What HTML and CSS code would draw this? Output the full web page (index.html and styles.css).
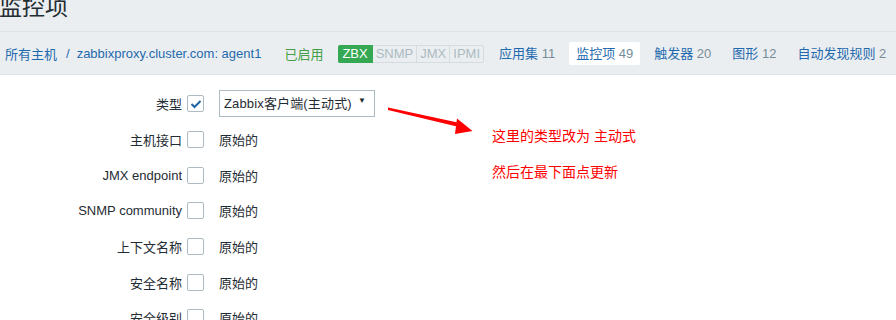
FILE: index.html
```html
<!DOCTYPE html>
<html lang="zh-CN">
<head>
  <meta charset="UTF-8" />
  <title>监控项</title>
  <link rel="stylesheet" href="styles.css">
</head>
<body>
  <div class="page">
    <div class="header">
      <h1>监控项</h1>
    </div>
    <div class="nav">
      <a class="crumb">所有主机</a>
      <span class="sep">/</span>
      <a class="crumb">zabbixproxy.cluster.com: agent1</a>
      <span class="status">已启用</span>
      <div class="badges">
        <span class="badge on">ZBX</span>
        <span class="badge">SNMP</span>
        <span class="badge">JMX</span>
        <span class="badge">IPMI</span>
      </div>
      <a class="tab">应用集 <span class="count">11</span></a>
      <a class="tab active">监控项 <span class="count">49</span></a>
      <a class="tab">触发器 <span class="count">20</span></a>
      <a class="tab">图形 <span class="count">12</span></a>
      <a class="tab">自动发现规则 <span class="count">2</span></a>
    </div>

    <div class="form">
      <div class="row">
        <label>类型</label>
        <span class="check checked">
          <svg width="12" height="10" viewBox="0 0 12 10"><path d="M1.5 5 L4.5 8 L10.5 2" fill="none" stroke="#1f65a6" stroke-width="2"/></svg>
        </span>
        <div class="select"><span class="select-text">Zabbix客户端(主动式)</span><span class="caret">▼</span></div>
      </div>
      <div class="row"><label>主机接口</label><span class="check"></span><span class="value">原始的</span></div>
      <div class="row"><label>JMX endpoint</label><span class="check"></span><span class="value">原始的</span></div>
      <div class="row"><label>SNMP community</label><span class="check"></span><span class="value">原始的</span></div>
      <div class="row"><label>上下文名称</label><span class="check"></span><span class="value">原始的</span></div>
      <div class="row"><label>安全名称</label><span class="check"></span><span class="value">原始的</span></div>
      <div class="row"><label>安全级别</label><span class="check"></span><span class="value">原始的</span></div>
    </div>

    <svg class="arrow" width="896" height="320" viewBox="0 0 896 320">
      <polygon points="388,107.5 388,110 459,127 460,123" fill="#ff0000"/>
      <polygon points="457,118.5 472.5,131 455,134" fill="#ff0000"/>
    </svg>
    <div class="note note-1">这里的类型改为 主动式</div>
    <div class="note note-2">然后在最下面点更新</div>
  </div>
</body>
</html>
```

FILE: styles.css
```css
body {
  margin: 0;
  font-family: 'Liberation Sans', Arial, 'Noto Sans CJK SC', sans-serif;
  font-size: 13px;
  color: #1f2c33;
  background: #fff;
}
.page {
  position: relative;
  width: 896px;
  height: 320px;
  overflow: hidden;
}
.header {
  height: 31px;
  background: #ebeef0;
  border-bottom: 1px solid #dde2e5;
  overflow: hidden;
}
.header h1 {
  margin: -4px 0 0 -1px;
  font-size: 23px;
  line-height: 23px;
  font-weight: normal;
  color: #1f2c33;
}
.nav {
  height: 42px;
  background: #ebeef0;
  border-bottom: 1px solid #dde2e5;
  display: flex;
  align-items: center;
  padding-left: 5px;
  white-space: nowrap;
}
.crumb {
  color: #1f6aae;
}
.sep {
  color: #1f6aae;
  margin: 0 7px 0 9px;
}
.status {
  color: #429e47;
  margin-left: 23px;
}
.badges {
  display: flex;
  margin-left: 15px;
  margin-top: 2px;
}
.badge {
  height: 16px;
  line-height: 16px;
  padding: 0 3px;
  border: 1px solid #d5dce0;
  border-left: none;
  background: #ebeef0;
  color: #acbbc2;
}
.badge.on {
  background: #34a853;
  border-color: #34a853;
  color: #fff;
  padding: 0 4px;
  border-radius: 2px 0 0 2px;
}
.badge:last-child {
  border-radius: 0 2px 2px 0;
}
.tab {
  color: #1f6aae;
  padding: 4px 7px;
  margin-left: 7px;
  line-height: 15px;
  border-radius: 2px;
}
.badges + .tab {
  margin-left: 8px;
}
.tab.active {
  background: #fff;
}
.count {
  color: #768d99;
}
.form {
  padding-top: 11px;
  display: grid;
  grid-auto-rows: 35.7px;
}
.row {
  display: grid;
  grid-template-columns: 182px 16px auto;
  column-gap: 5px;
  align-items: center;
}
.row label {
  text-align: right;
}
.check {
  width: 15px;
  height: 15px;
  border: 1px solid #acbbc2;
  border-radius: 2px;
  display: flex;
  align-items: center;
  justify-content: center;
  background: #fff;
}
.value {
  margin-left: 11px;
}
.select {
  margin-left: 11px;
  width: 150px;
  height: 25px;
  line-height: 25px;
  border: 1px solid #acbbc2;
  padding: 0 0 0 4px;
  display: flex;
  justify-content: space-between;
}
.select-text {
  white-space: nowrap;
  letter-spacing: 0.15px;
}
.caret {
  font-size: 8px;
  line-height: 20px;
  margin-right: 8px;
  color: #1f2c33;
}
.arrow {
  position: absolute;
  left: 0;
  top: 0;
  pointer-events: none;
}
.note {
  position: absolute;
  left: 492px;
  color: #ff0000;
  font-size: 14px;
  line-height: 16px;
}
.note-1 {
  top: 128px;
}
.note-2 {
  top: 164px;
}
```
